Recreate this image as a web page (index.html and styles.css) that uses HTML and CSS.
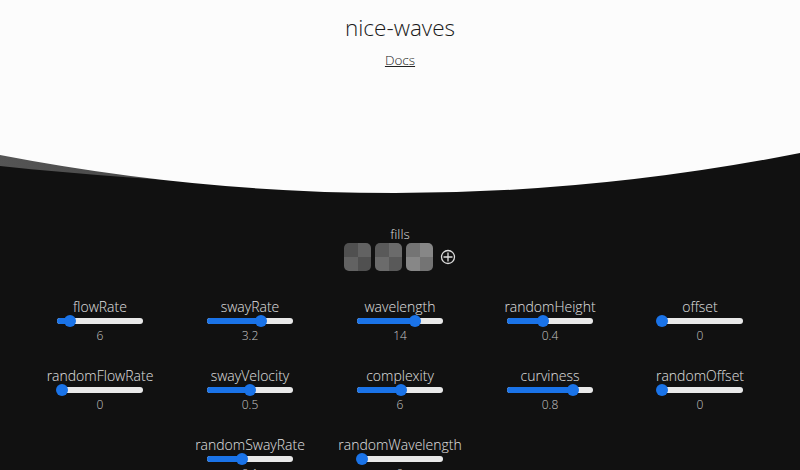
FILE: index.html
```html
<!DOCTYPE html>
<html>
<head>
<meta charset="utf-8">
<link rel="stylesheet" href="styles.css">
</head>
<body>
<header class="hero">
  <h1 class="title">nice-waves</h1>
  <a class="docs" href="#">Docs</a>
</header>
<svg class="wave" viewBox="0 0 800 50" preserveAspectRatio="none" width="800" height="50">
  <defs>
    <linearGradient id="shade" x1="0" y1="0" x2="1" y2="0">
      <stop offset="0" stop-color="#555"/>
      <stop offset="0.5" stop-color="#333"/>
      <stop offset="1" stop-color="#181818"/>
    </linearGradient>
  </defs>
  <rect x="0" y="0" width="800" height="50" fill="#111"/>
  <path d="M0,0 L0,16 C250,42 520,50 800,3 L800,0 Z" fill="url(#shade)"/>
  <path d="M0,0 L0,5 Q400,82 800,3 L800,0 Z" fill="#fcfcfc"/>
</svg>
<main class="panel">
  <section class="fills">
    <div class="fills-label">fills</div>
    <div class="fills-row">
      <div class="swatch s1"><i></i><i></i><i></i><i></i></div>
      <div class="swatch s2"><i></i><i></i><i></i><i></i></div>
      <div class="swatch s3"><i></i><i></i><i></i><i></i></div>
      <svg class="add" width="16" height="16" viewBox="0 0 16 16"><circle cx="8" cy="8" r="6.5" fill="none" stroke="#ddd" stroke-width="1.3"/><path d="M8 3.5V12.5M3.5 8H12.5" stroke="#ddd" stroke-width="1.3"/></svg>
    </div>
  </section>
  <section class="controls">
    <div class="ctrl"><div class="lbl">flowRate</div><div class="track"><div class="fill" style="width:13px"></div><div class="thumb" style="left:13px"></div></div><div class="val">6</div></div>
    <div class="ctrl"><div class="lbl">swayRate</div><div class="track"><div class="fill" style="width:54px"></div><div class="thumb" style="left:54px"></div></div><div class="val">3.2</div></div>
    <div class="ctrl"><div class="lbl">wavelength</div><div class="track"><div class="fill" style="width:58px"></div><div class="thumb" style="left:58px"></div></div><div class="val">14</div></div>
    <div class="ctrl"><div class="lbl">randomHeight</div><div class="track"><div class="fill" style="width:36px"></div><div class="thumb" style="left:36px"></div></div><div class="val">0.4</div></div>
    <div class="ctrl"><div class="lbl">offset</div><div class="track"><div class="fill" style="width:5px"></div><div class="thumb" style="left:5px"></div></div><div class="val">0</div></div>
    <div class="ctrl"><div class="lbl">randomFlowRate</div><div class="track"><div class="fill" style="width:5px"></div><div class="thumb" style="left:5px"></div></div><div class="val">0</div></div>
    <div class="ctrl"><div class="lbl">swayVelocity</div><div class="track"><div class="fill" style="width:43px"></div><div class="thumb" style="left:43px"></div></div><div class="val">0.5</div></div>
    <div class="ctrl"><div class="lbl">complexity</div><div class="track"><div class="fill" style="width:44px"></div><div class="thumb" style="left:44px"></div></div><div class="val">6</div></div>
    <div class="ctrl"><div class="lbl">curviness</div><div class="track"><div class="fill" style="width:66px"></div><div class="thumb" style="left:66px"></div></div><div class="val">0.8</div></div>
    <div class="ctrl"><div class="lbl">randomOffset</div><div class="track"><div class="fill" style="width:5px"></div><div class="thumb" style="left:5px"></div></div><div class="val">0</div></div>
    <div class="ctrl col2"><div class="lbl">randomSwayRate</div><div class="track"><div class="fill" style="width:35px"></div><div class="thumb" style="left:35px"></div></div><div class="val">0.1</div></div>
    <div class="ctrl"><div class="lbl">randomWavelength</div><div class="track"><div class="fill" style="width:5px"></div><div class="thumb" style="left:5px"></div></div><div class="val">0</div></div>
  </section>
</main>
</body>
</html>
```

FILE: styles.css
```css
* { box-sizing: border-box; }
html, body { margin: 0; padding: 0; }
body {
  background: #111;
  font-family: "Open Sans", "DejaVu Sans", sans-serif;
  font-weight: 300;
  width: 800px;
  height: 470px;
  overflow: hidden;
}
.hero {
  background: #fcfcfc;
  height: 150px;
  display: flex;
  flex-direction: column;
  align-items: center;
  padding-top: 13px;
}
.title {
  margin: 0;
  font-size: 22.5px;
  font-weight: 300;
  color: #1a1a1a;
  line-height: 30px;
}
.docs {
  margin-top: 8px;
  font-size: 13.5px;
  color: #222;
  text-decoration: underline;
  line-height: 18px;
}
.wave { display: block; }
.panel {
  padding-top: 26px;
  display: flex;
  flex-direction: column;
  align-items: center;
}
.fills {
  display: flex;
  flex-direction: column;
  align-items: center;
}
.fills-label {
  color: #ddd;
  font-size: 13.5px;
  line-height: 16px;
}
.fills-row {
  display: flex;
  align-items: center;
  gap: 4px;
  margin-top: 1px;
}
.swatch {
  width: 27px;
  height: 28px;
  border-radius: 5px;
  overflow: hidden;
  display: grid;
  grid-template-columns: 1fr 1fr;
  grid-template-rows: 1fr 1fr;
}
.swatch i { display: block; }
.s1 i:nth-child(1) { background: #505050; }
.s1 i:nth-child(2) { background: #626262; }
.s1 i:nth-child(3) { background: #626262; }
.s1 i:nth-child(4) { background: #505050; }
.s2 i:nth-child(1) { background: #595959; }
.s2 i:nth-child(2) { background: #6b6b6b; }
.s2 i:nth-child(3) { background: #6b6b6b; }
.s2 i:nth-child(4) { background: #595959; }
.s3 i:nth-child(1) { background: #747474; }
.s3 i:nth-child(2) { background: #878787; }
.s3 i:nth-child(3) { background: #878787; }
.s3 i:nth-child(4) { background: #747474; }
.add { margin-left: 3px; }
.controls {
  margin-top: 28px;
  width: 750px;
  display: grid;
  grid-template-columns: repeat(5, 150px);
  row-gap: 25px;
}
.ctrl {
  display: flex;
  flex-direction: column;
  align-items: center;
}
.col2 { grid-column-start: 2; }
.lbl {
  color: #e0e0e0;
  font-size: 14px;
  line-height: 16px;
}
.track {
  position: relative;
  width: 86px;
  height: 6px;
  margin-top: 3px;
  background: #e9e9e9;
  border-radius: 3px;
}
.fill {
  position: absolute;
  left: 0;
  top: 0;
  bottom: 0;
  background: #1a73e8;
  border-radius: 3px;
}
.thumb {
  position: absolute;
  top: 50%;
  width: 12px;
  height: 12px;
  margin: -6px 0 0 -6px;
  border-radius: 50%;
  background: #1a73e8;
}
.val {
  color: #c8c8c8;
  font-size: 12px;
  line-height: 14px;
  margin-top: 5px;
}
```
